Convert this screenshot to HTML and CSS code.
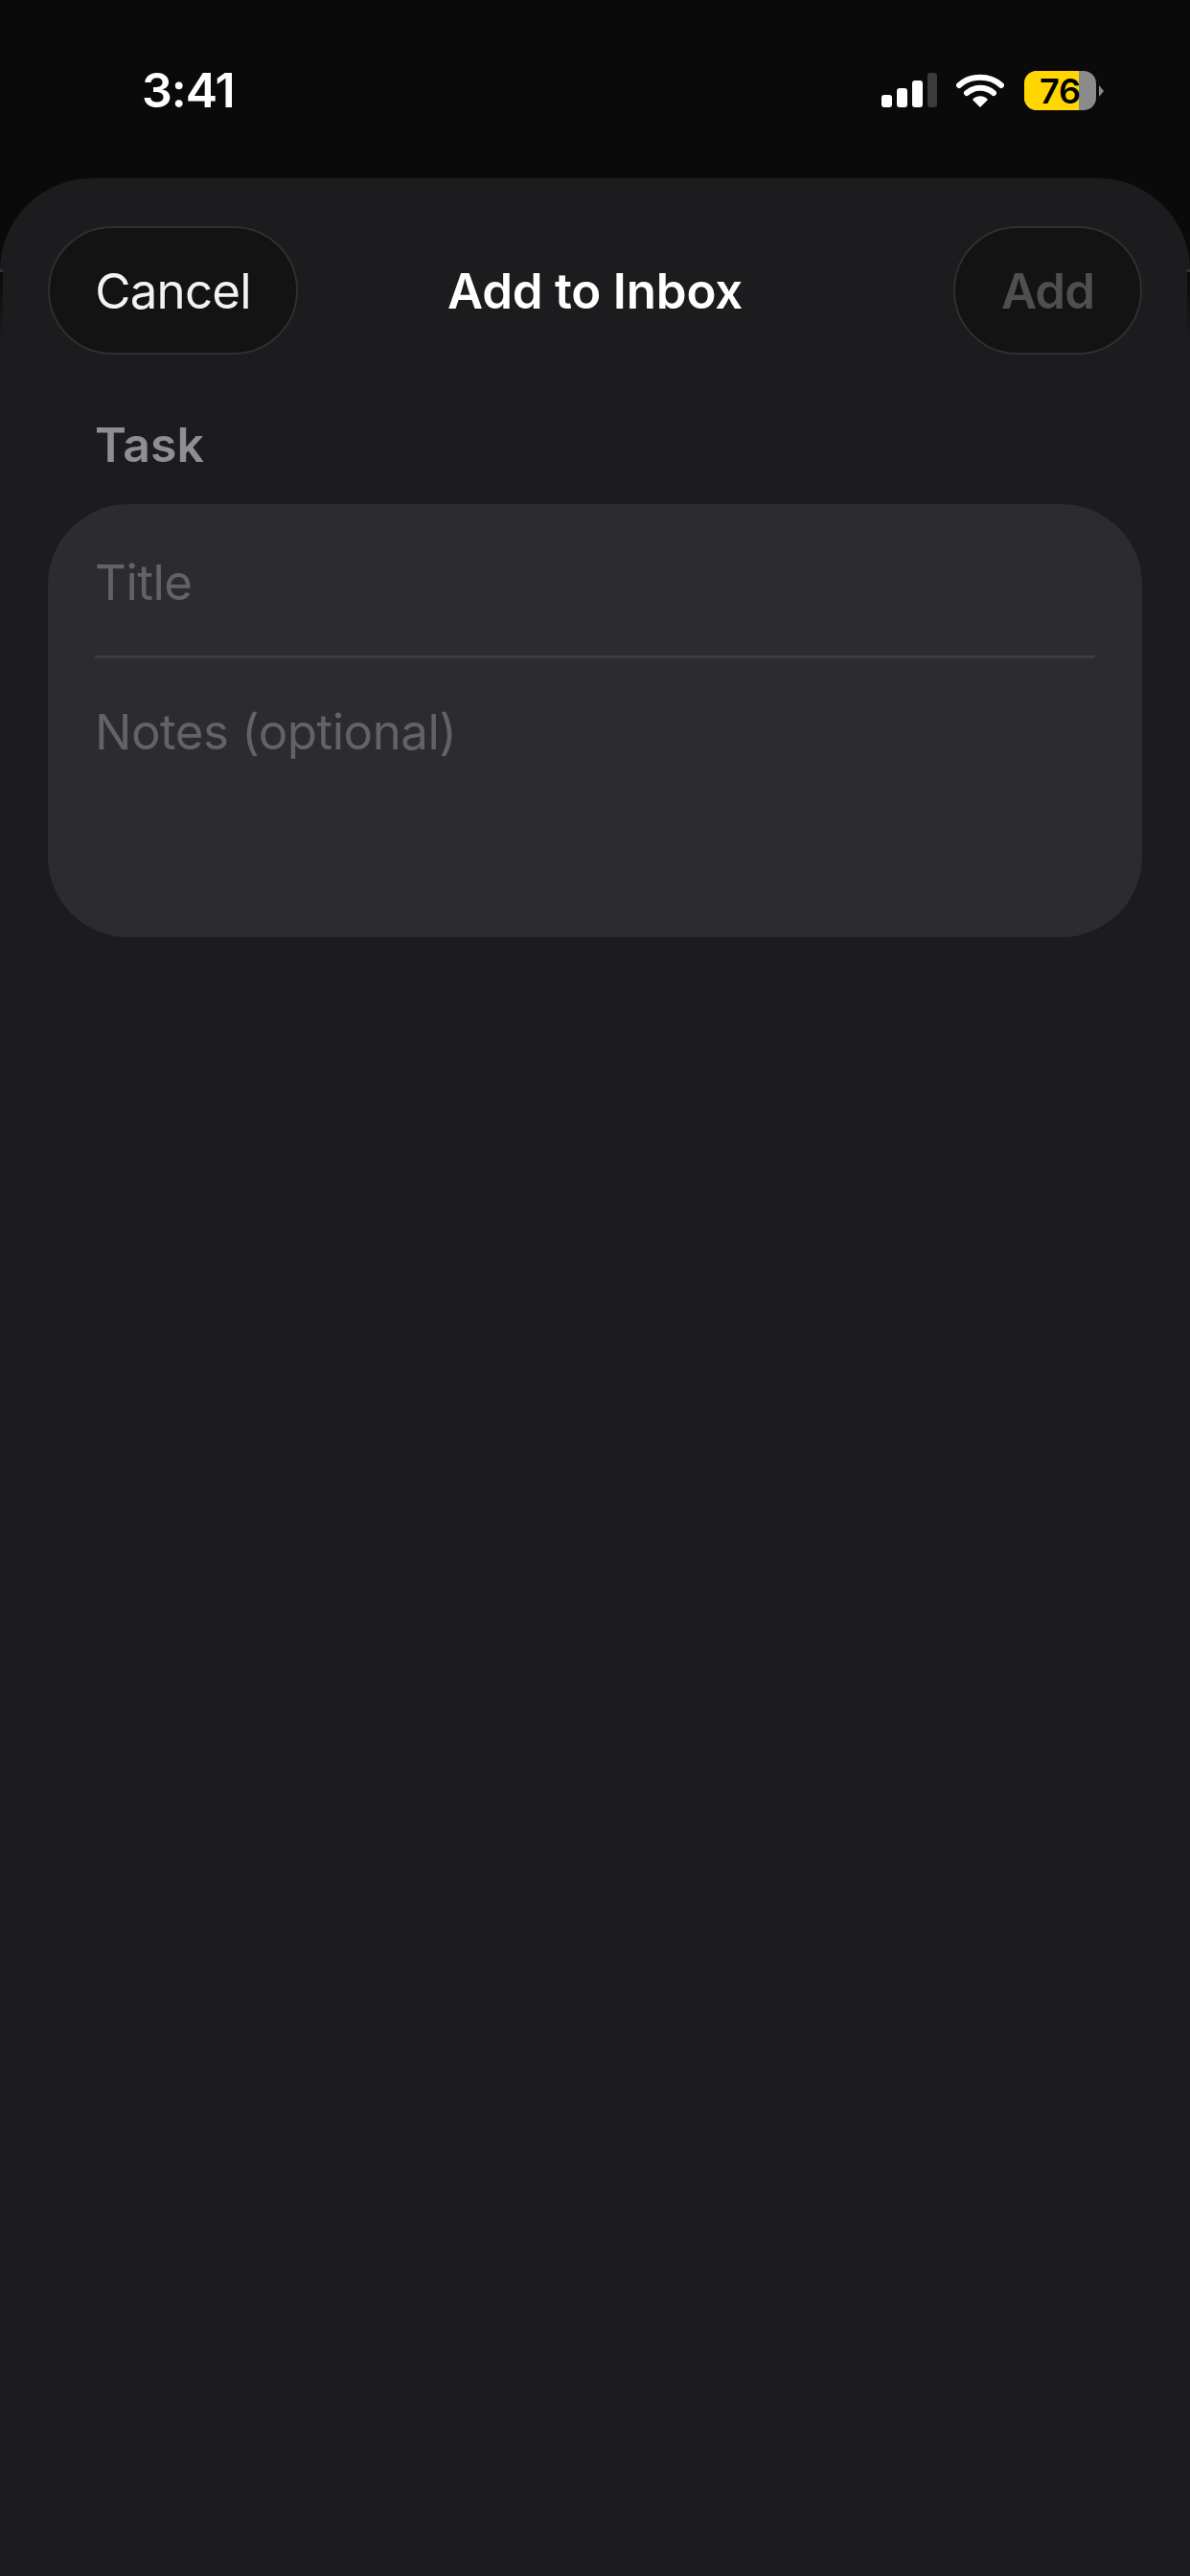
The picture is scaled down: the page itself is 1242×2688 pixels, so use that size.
FILE: index.html
```html
<!DOCTYPE html>
<html>
<head>
    <title>Add to Inbox</title>
    <link rel="stylesheet" href="styles.css">
</head>
<body>
    <div class="status-bar">
        <span class="clock">3:41</span>
        <div class="status-icons">
            <svg class="signal" width="58" height="36" viewBox="0 0 58 36">
                <rect x="0" y="23" width="11" height="13" rx="3" fill="#fff"/>
                <rect x="16" y="16" width="11" height="20" rx="3" fill="#fff"/>
                <rect x="32" y="8" width="11" height="28" rx="3" fill="#fff"/>
                <rect x="48" y="0" width="10" height="36" rx="3" fill="#3b3b3b"/>
            </svg>
            <svg class="wifi" width="50" height="36" viewBox="0 0 50 36">
                <path d="M3 13 C15 2 35 2 47 13" fill="none" stroke="#fff" stroke-width="6" stroke-linecap="round"/>
                <path d="M11 21 C19 14 31 14 39 21" fill="none" stroke="#fff" stroke-width="6" stroke-linecap="round"/>
                <path d="M17 28 C21 23 29 23 33 28 L25 36 Z" fill="#fff"/>
            </svg>
            <div class="battery">
                <div class="battery-body">
                    <div class="battery-fill"></div>
                    <span class="battery-level">76</span>
                </div>
                <div class="battery-tip"></div>
            </div>
        </div>
    </div>

    <div class="sheet">
        <div class="nav">
            <div class="pill pill-cancel">Cancel</div>
            <div class="nav-title">Add to Inbox</div>
            <div class="pill pill-add">Add</div>
        </div>
        <div class="section-label">Task</div>
        <div class="card">
            <div class="field field-title">Title</div>
            <div class="divider"></div>
            <div class="field field-notes">Notes (optional)</div>
        </div>
    </div>
</body>
</html>
```

FILE: styles.css
```css
* {
    box-sizing: border-box;
}
html, body {
    margin: 0;
    padding: 0;
}
body {
    width: 1242px;
    height: 2688px;
    overflow: hidden;
    background-color: #0a0a0b;
    font-family: Inter, "Liberation Sans", sans-serif;
    display: flex;
    flex-direction: column;
}
.status-bar {
    height: 186px;
    flex-shrink: 0;
    display: flex;
    justify-content: space-between;
    align-items: flex-start;
    padding: 69px 0 0 148px;
}
.clock {
    color: #fff;
    font-size: 50px;
    line-height: 50px;
    font-weight: 600;
    letter-spacing: -1px;
}
.status-icons {
    display: flex;
    align-items: flex-start;
    padding: 5px 90px 0 0;
}
.signal {
    margin: 2px 20px 0 0;
}
.wifi {
    margin: 2px 21px 0 0;
}
.battery {
    display: flex;
    align-items: center;
}
.battery-body {
    position: relative;
    width: 75px;
    height: 41px;
    border-radius: 13px;
    background-color: #8a8a8a;
    overflow: hidden;
    display: flex;
    justify-content: center;
    align-items: center;
}
.battery-fill {
    position: absolute;
    left: 0;
    top: 0;
    bottom: 0;
    width: 57px;
    background-color: #ffd600;
}
.battery-level {
    position: relative;
    color: #000;
    font-size: 36px;
    font-weight: 600;
}
.battery-tip {
    width: 0;
    height: 0;
    margin-left: 3px;
    border-top: 6px solid transparent;
    border-bottom: 6px solid transparent;
    border-left: 5px solid #8a8a8a;
}
.sheet {
    position: relative;
    flex: 1;
    background-color: #1c1c1e;
    border-radius: 96px 96px 0 0;
    padding: 50px 50px 0;
}
/* bit of the page behind the sheet showing at both edges */
.sheet::before,
.sheet::after {
    content: "";
    position: absolute;
    top: 95px;
    width: 3px;
    height: 70px;
    border-top: 3px solid #333335;
    background: linear-gradient(#0a0a0b, #1c1c1e);
}
.sheet::before {
    left: 0;
}
.sheet::after {
    right: 0;
}
.nav {
    display: flex;
    justify-content: space-between;
    align-items: center;
    height: 134px;
    position: relative;
}
.pill {
    height: 134px;
    border-radius: 67px;
    background-color: #131314;
    border: 2px solid #2f2f31;
    display: flex;
    align-items: center;
    justify-content: center;
    font-size: 51px;
}
.pill-cancel {
    width: 261px;
    color: #f2f2f2;
    letter-spacing: -0.8px;
}
.pill-add {
    width: 197px;
    color: #4f4f51;
    font-weight: 600;
    letter-spacing: -1px;
}
.nav-title {
    position: absolute;
    left: 0;
    right: 0;
    text-align: center;
    color: #fff;
    font-size: 51px;
    font-weight: 600;
    letter-spacing: -0.2px;
}
.section-label {
    margin: 64px 0 0 49px;
    color: #8e8e93;
    font-size: 50px;
    line-height: 60px;
    font-weight: 600;
}
.card {
    margin-top: 32px;
    height: 452px;
    border-radius: 84px;
    background-color: #2c2c2e;
    padding: 0 49px;
}
.field {
    color: #636366;
    font-size: 51px;
    line-height: 60px;
    letter-spacing: -0.5px;
}
.field-title {
    padding-top: 52px;
    height: 158px;
}
.divider {
    height: 3px;
    background-color: #3d3d40;
}
.field-notes {
    padding-top: 47px;
    height: 107px;
}
```
